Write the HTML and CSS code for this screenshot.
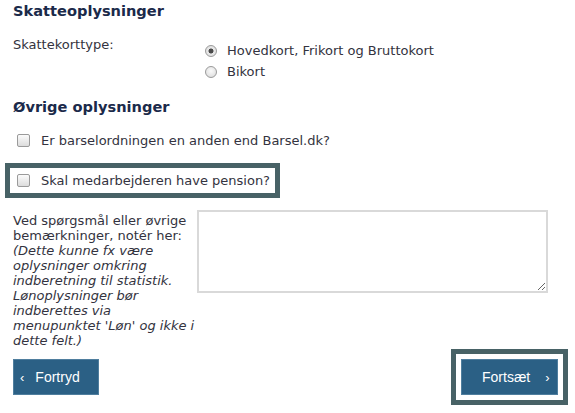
FILE: index.html
```html
<!DOCTYPE html>
<html lang="da">
<head>
<meta charset="utf-8">
<title>Skatteoplysninger</title>
<link rel="stylesheet" href="styles.css">
</head>
<body>
<div class="page">
  <h2 class="section-title">Skatteoplysninger</h2>
  <div class="field-row">
    <div class="field-label">Skattekorttype:</div>
    <div class="radio-group">
      <label class="option"><input class="radio" type="radio" name="kort" checked><span>Hovedkort, Frikort og Bruttokort</span></label>
      <label class="option"><input class="radio" type="radio" name="kort"><span>Bikort</span></label>
    </div>
  </div>

  <h2 class="section-title second">Øvrige oplysninger</h2>
  <label class="option check-row"><input class="check" type="checkbox"><span>Er barselordningen en anden end Barsel.dk?</span></label>
  <div class="highlight check-highlight">
    <label class="option"><input class="check" type="checkbox"><span>Skal medarbejderen have pension?</span></label>
  </div>

  <div class="notes-row">
    <div class="notes-label">Ved spørgsmål eller øvrige<br>bemærkninger, notér her:<br><em>(Dette kunne fx være<br>oplysninger omkring<br>indberetning til statistik.<br>Lønoplysninger bør<br>indberettes via<br>menupunktet 'Løn' og ikke i<br>dette felt.)</em></div>
    <textarea class="notes"></textarea>
  </div>

  <div class="actions">
    <button class="btn btn-back" type="button"><span class="chev">‹</span><span>Fortryd</span></button>
    <div class="highlight btn-highlight">
      <button class="btn btn-next" type="button"><span>Fortsæt</span><span class="chev">›</span></button>
    </div>
  </div>
</div>
</body>
</html>
```

FILE: styles.css
```css
* { box-sizing: border-box; }

html, body {
  margin: 0;
  padding: 0;
  background: #ffffff;
}

body {
  font-family: "DejaVu Sans", Verdana, sans-serif;
  font-size: 13px;
  color: #333340;
}

.page {
  width: 575px;
  padding: 1px 7px 0 13px;
}

.section-title {
  margin: 0;
  font-size: 14.6px;
  line-height: 20px;
  font-weight: bold;
  color: #1b2a4a;
}

.section-title.second {
  margin-top: 15px;
}

.field-row {
  display: flex;
  margin-top: 13px;
}

.field-label {
  width: 192px;
  flex: none;
  line-height: 21px;
}

.radio-group {
  display: flex;
  flex-direction: column;
  padding-top: 6px;
}

.option {
  display: flex;
  align-items: center;
  line-height: 21px;
  white-space: nowrap;
}

.radio {
  appearance: none;
  -webkit-appearance: none;
  width: 12px;
  height: 12px;
  margin: 0 10px 0 0;
  border: 1px solid #9a9a9a;
  border-radius: 50%;
  background: radial-gradient(circle at 50% 40%, #fafafa 0%, #e6e6e6 60%, #d4d4d4 100%);
  flex: none;
}

.radio:checked {
  background: radial-gradient(circle, #4a4a4a 0, #4a4a4a 2.2px, #e9e9e9 2.8px, #dadada 100%);
}

.check {
  appearance: none;
  -webkit-appearance: none;
  width: 13px;
  height: 13px;
  margin: 0 11px 0 0;
  border: 1px solid #9a9a9a;
  border-radius: 2px;
  background: linear-gradient(#fbfbfb, #dcdcdc);
  flex: none;
}

.check-row {
  margin: 13px 0 0 4px;
}

.highlight {
  border: 5px solid #486266;
  background: #ffffff;
}

.check-highlight {
  width: fit-content;
  margin: 12px 0 0 -8px;
  padding: 2px 5px 2px 7px;
}

.notes-row {
  display: flex;
  margin-top: 12px;
}

.notes-label {
  width: 184px;
  flex: none;
  padding-top: 3px;
  line-height: 15px;
  white-space: nowrap;
}

.notes-label em {
  font-style: italic;
}

.notes {
  width: 351px;
  height: 83px;
  border: 2px solid #d9d9d9;
  margin: 0;
  padding: 2px;
  font: inherit;
  background: #ffffff;
}

.actions {
  display: flex;
  justify-content: space-between;
  align-items: center;
  margin-top: 1px;
}

.btn {
  display: flex;
  align-items: center;
  height: 36px;
  margin: 0;
  border: 1px solid #4f7e9e;
  background: #2b6085;
  color: #ffffff;
  font-family: "Liberation Sans", Arial, sans-serif;
  font-size: 14px;
  cursor: pointer;
}

.chev {
  font-size: 13px;
  line-height: 1;
}

.btn-back {
  width: 86px;
  padding: 0 0 0 6px;
}

.btn-back .chev {
  margin-right: 11px;
}

.btn-next {
  width: 97px;
  padding: 0 0 0 20px;
}

.btn-next .chev {
  margin-left: 15px;
}

.btn-highlight {
  padding: 5px;
}
```
